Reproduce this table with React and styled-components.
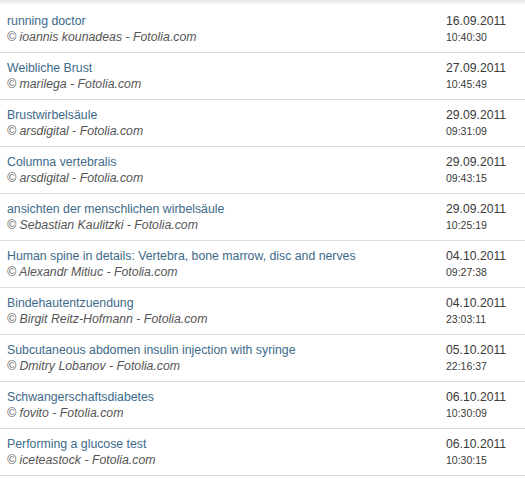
import React from 'react'
import styled, { createGlobalStyle } from 'styled-components'

const GlobalStyle = createGlobalStyle`
  body {
    margin: 0;
    background: #fff;
    font-family: "Liberation Sans", Arial, sans-serif;
  }
`

const items = [
  { title: 'running doctor', author: 'ioannis kounadeas', date: '16.09.2011', time: '10:40:30' },
  { title: 'Weibliche Brust', author: 'marilega', date: '27.09.2011', time: '10:45:49' },
  { title: 'Brustwirbelsäule', author: 'arsdigital', date: '29.09.2011', time: '09:31:09' },
  { title: 'Columna vertebralis', author: 'arsdigital', date: '29.09.2011', time: '09:43:15' },
  { title: 'ansichten der menschlichen wirbelsäule', author: 'Sebastian Kaulitzki', date: '29.09.2011', time: '10:25:19' },
  { title: 'Human spine in details: Vertebra, bone marrow, disc and nerves', author: 'Alexandr Mitiuc', date: '04.10.2011', time: '09:27:38' },
  { title: 'Bindehautentzuendung', author: 'Birgit Reitz-Hofmann', date: '04.10.2011', time: '23:03:11' },
  { title: 'Subcutaneous abdomen insulin injection with syringe', author: 'Dmitry Lobanov', date: '05.10.2011', time: '22:16:37' },
  { title: 'Schwangerschaftsdiabetes', author: 'fovito', date: '06.10.2011', time: '10:30:09' },
  { title: 'Performing a glucose test', author: 'iceteastock', date: '06.10.2011', time: '10:30:15' },
]

const App = () => {
  return (
    <>
      <GlobalStyle />
      <List>
        {items.map((item, i) => (
          <Row key={i}>
            <Info>
              <Title>{item.title}</Title>
              <Author>© {item.author} - Fotolia.com</Author>
            </Info>
            <Stamp>
              <DateText>{item.date}</DateText>
              <TimeText>{item.time}</TimeText>
            </Stamp>
          </Row>
        ))}
      </List>
    </>
  )
}

export default App

const List = styled.div`
  width: 525px;
  padding-top: 6px;
  background: linear-gradient(to bottom, #e6e6e6 0px, #fff 5px);
`

const Row = styled.div`
  display: grid;
  grid-template-columns: 1fr 79px;
  height: 46px;
  padding: 0 0 0 7px;
  border-bottom: 1px solid #dcdcdc;
  box-sizing: content-box;
`

const Info = styled.div`
  display: flex;
  flex-direction: column;
  padding-top: 7px;
`

const Title = styled.a`
  font-size: 12.3px;
  line-height: 16px;
  color: #3d6a89;
  text-decoration: none;
`

const Author = styled.span`
  font-size: 12.3px;
  line-height: 16px;
  font-style: italic;
  color: #555;
`

const Stamp = styled.div`
  display: flex;
  flex-direction: column;
  padding-top: 7px;
`

const DateText = styled.span`
  font-size: 12.2px;
  line-height: 16px;
  color: #3a3a3a;
`

const TimeText = styled.span`
  font-size: 10.5px;
  line-height: 17px;
  color: #3a3a3a;
`
